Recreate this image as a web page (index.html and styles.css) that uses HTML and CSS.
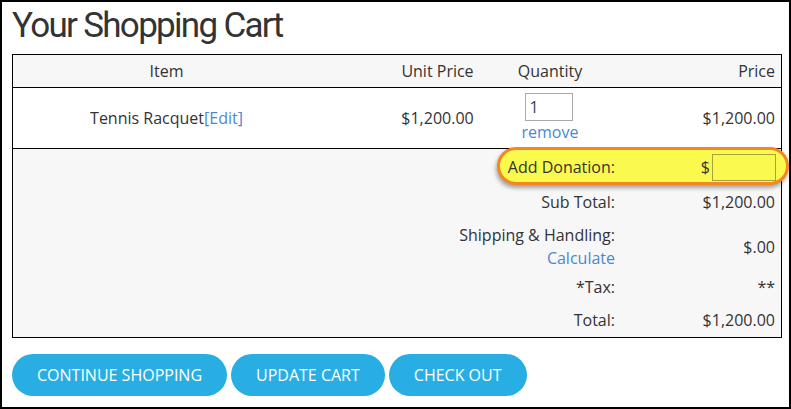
FILE: index.html
```html
<!DOCTYPE html>
<html lang="en">
<head>
<meta charset="utf-8">
<title>Your Shopping Cart</title>
<link rel="stylesheet" href="styles.css">
</head>
<body>
<div class="frame">
  <h1 class="title">Your Shopping Cart</h1>
  <div class="cart">
    <div class="cart-head">
      <div class="col-item">Item</div>
      <div class="col-unit">Unit Price</div>
      <div class="col-qty">Quantity</div>
      <div class="col-price">Price</div>
    </div>
    <div class="cart-row">
      <div class="col-item">Tennis Racquet<a class="link" href="#">[Edit]</a></div>
      <div class="col-unit">$1,200.00</div>
      <div class="col-qty qty-cell">
        <input class="qty-input" type="text" value="1">
        <a class="link" href="#">remove</a>
      </div>
      <div class="col-price">$1,200.00</div>
    </div>
    <div class="totals">
      <div class="highlight"></div>
      <div class="tot-row tot-donation">
        <div class="tot-label">Add Donation:</div>
        <div class="tot-value donation-value">$<input class="donation-input" type="text"></div>
      </div>
      <div class="tot-row">
        <div class="tot-label">Sub Total:</div>
        <div class="tot-value">$1,200.00</div>
      </div>
      <div class="tot-row tot-shipping">
        <div class="tot-label">Shipping &amp; Handling:<br><a class="link" href="#">Calculate</a></div>
        <div class="tot-value">$.00</div>
      </div>
      <div class="tot-row tot-tax">
        <div class="tot-label">*Tax:</div>
        <div class="tot-value">**</div>
      </div>
      <div class="tot-row">
        <div class="tot-label">Total:</div>
        <div class="tot-value">$1,200.00</div>
      </div>
    </div>
  </div>
  <div class="actions">
    <button class="btn btn-continue">CONTINUE SHOPPING</button>
    <button class="btn btn-update">UPDATE CART</button>
    <button class="btn btn-checkout">CHECK OUT</button>
  </div>
</div>
</body>
</html>
```

FILE: styles.css
```css
* { box-sizing: border-box; }

body {
  margin: 0;
  background: #fff;
  font-family: "Open Sans", "Liberation Sans", sans-serif;
  font-size: 16px;
  line-height: 23px;
  color: #333;
}

.frame {
  width: 791px;
  height: 409px;
  border: 2px solid #000;
  padding: 0 0 0 10px;
}

.title {
  margin: 0;
  padding: 3px 0 0 0;
  height: 52px;
  font-family: Roboto, "Liberation Sans", sans-serif;
  font-weight: 400;
  font-size: 35px;
  line-height: 42px;
  letter-spacing: -1.7px;
  color: #333;
}

.cart {
  width: 770px;
  border: 1px solid #000;
}

.cart-head,
.cart-row {
  display: grid;
  grid-template-columns: 382px 85px 140px 1fr;
  align-items: center;
  border-bottom: 1px solid #000;
}

.cart-head {
  height: 33px;
  background: #f7f7f7;
}

.cart-row {
  height: 61px;
  background: #fff;
}

.col-item { text-align: center; padding-right: 75px; }
.col-unit { text-align: center; }
.col-qty { text-align: center; }
.col-price { text-align: right; padding-right: 6px; }

.qty-cell {
  display: flex;
  flex-direction: column;
  align-items: center;
}

.qty-input {
  width: 48px;
  height: 28px;
  margin: 0 3px 0 0;
  padding: 0 4px;
  border: 1px solid #a9a9a9;
  font-family: inherit;
  font-size: 16px;
  color: #3a3a66;
  background: #fff;
}

.link {
  color: #4a88d2;
  text-decoration: none;
}

.totals {
  position: relative;
  background: #f7f7f7;
  height: 188px;
}

.highlight {
  position: absolute;
  left: 484px;
  top: -2px;
  width: 292px;
  height: 38px;
  border: 3px solid #f6861f;
  border-radius: 20px;
  background: #fafa4e;
  box-shadow: -1px 3px 4px rgba(0, 0, 0, 0.35);
  z-index: 0;
}

.tot-row {
  position: relative;
  z-index: 1;
  display: grid;
  grid-template-columns: 1fr 161px;
  align-items: center;
  padding: 5px 0;
}

.tot-shipping { padding-bottom: 0; }
.tot-tax { padding-top: 6px; }

.tot-label {
  text-align: right;
  padding-right: 5px;
}

.tot-value {
  text-align: right;
  padding-right: 6px;
}

.donation-value {
  display: flex;
  justify-content: flex-end;
  align-items: center;
  padding-right: 5px;
}

.donation-input {
  width: 64px;
  height: 27px;
  margin: 0 0 0 2px;
  padding: 0;
  border: 1px solid #a5a540;
  background: transparent;
}

.actions {
  display: flex;
  gap: 4px;
  margin-top: 16px;
}

.btn {
  height: 42px;
  border: none;
  border-radius: 21px;
  background: #29aee4;
  color: #fff;
  font-family: "Open Sans", "Liberation Sans", sans-serif;
  font-size: 16px;
  padding: 0 25px;
  cursor: pointer;
}
```
